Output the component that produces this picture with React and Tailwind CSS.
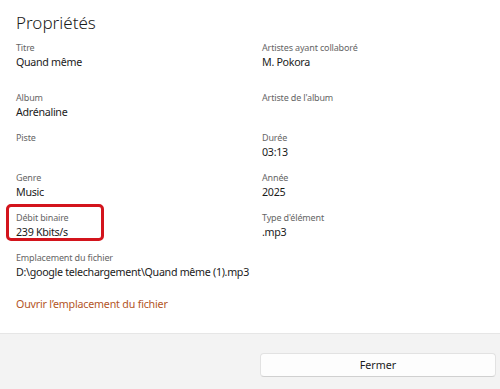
import React from 'react';

const rows = [
  [
    { label: 'Titre', value: 'Quand même' },
    { label: 'Artistes ayant collaboré', value: 'M. Pokora' },
  ],
  [
    { label: 'Album', value: 'Adrénaline' },
    { label: "Artiste de l'album", value: '' },
  ],
  [
    { label: 'Piste', value: '' },
    { label: 'Durée', value: '03:13' },
  ],
  [
    { label: 'Genre', value: 'Music' },
    { label: 'Année', value: '2025' },
  ],
  [
    { label: 'Débit binaire', value: '239 Kbits/s', highlight: true },
    { label: "Type d'élément", value: '.mp3' },
  ],
];

const Field = ({ label, value, highlight, className = '' }) => (
  <div className={`relative ${className}`}>
    {highlight && (
      <div className="absolute left-[-10px] top-[-8px] w-[98px] h-[37px] border-[3px] border-[#d3141c] rounded-[5px]"></div>
    )}
    <div className="text-[9px] leading-[12px] tracking-[-0.15px] text-[#666666]">{label}</div>
    {value && (
      <div className="text-[10.7px] leading-[16px] tracking-[-0.3px] text-[#1b1b1b]">{value}</div>
    )}
  </div>
);

export default function App() {
  return (
    <div
      className="w-[500px] h-[389px] bg-white flex flex-col overflow-hidden"
      style={{ fontFamily: '"Segoe UI", "Noto Sans", "Open Sans", sans-serif' }}
    >
      <div className="flex-1 pl-4 pt-[11px]">
        <h1 className="text-[17px] leading-[24px] font-light text-[#1b1b1b]">Propriétés</h1>

        <div className="mt-[7px]">
          {rows.map((row, i) => (
            <div key={i} className={`flex ${i === 0 ? 'h-[50px]' : 'h-[40px]'}`}>
              <Field {...row[0]} className="w-[246px] shrink-0" />
              <Field {...row[1]} className="flex-1" />
            </div>
          ))}

          <div className="h-[44px]">
            <div className="text-[9px] leading-[12px] tracking-[-0.15px] text-[#666666]">
              Emplacement du fichier
            </div>
            <div className="text-[10.7px] leading-[16px] tracking-[-0.3px] text-[#1b1b1b]">
              D:\google telechargement\Quand même (1).mp3
            </div>
          </div>

          <div className="text-[10.7px] leading-[16px] tracking-[-0.2px] text-[#b3551f]">
            Ouvrir l’emplacement du fichier
          </div>
        </div>
      </div>

      <div className="h-[56px] bg-[#f3f3f3] border-t border-[#e6e6e6] flex items-start justify-end pt-[19px] pr-[4px]">
        <button className="w-[236px] h-[24px] bg-[#fdfdfd] border border-[#e2e2e2] border-b-[#d0d0d0] rounded-[4px] text-[10.7px] text-[#1b1b1b]">
          Fermer
        </button>
      </div>
    </div>
  );
}
